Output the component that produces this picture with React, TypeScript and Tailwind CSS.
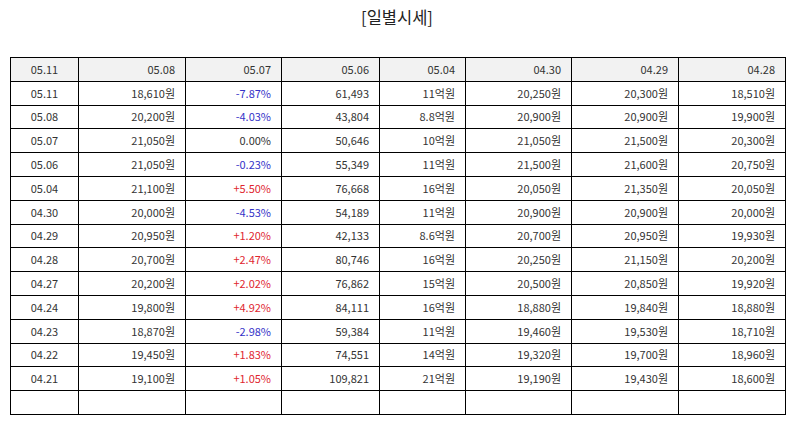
const cols = [68, 107, 96, 98, 86, 106, 107, 107];

const header = ['05.11', '05.08', '05.07', '05.06', '05.04', '04.30', '04.29', '04.28'];

type Row = [string, string, string, string, string, string, string, string];

const rows: Row[] = [
  ['05.11', '18,610원', '-7.87%', '61,493', '11억원', '20,250원', '20,300원', '18,510원'],
  ['05.08', '20,200원', '-4.03%', '43,804', '8.8억원', '20,900원', '20,900원', '19,900원'],
  ['05.07', '21,050원', '0.00%', '50,646', '10억원', '21,050원', '21,500원', '20,300원'],
  ['05.06', '21,050원', '-0.23%', '55,349', '11억원', '21,500원', '21,600원', '20,750원'],
  ['05.04', '21,100원', '+5.50%', '76,668', '16억원', '20,050원', '21,350원', '20,050원'],
  ['04.30', '20,000원', '-4.53%', '54,189', '11억원', '20,900원', '20,900원', '20,000원'],
  ['04.29', '20,950원', '+1.20%', '42,133', '8.6억원', '20,700원', '20,950원', '19,930원'],
  ['04.28', '20,700원', '+2.47%', '80,746', '16억원', '20,250원', '21,150원', '20,200원'],
  ['04.27', '20,200원', '+2.02%', '76,862', '15억원', '20,500원', '20,850원', '19,920원'],
  ['04.24', '19,800원', '+4.92%', '84,111', '16억원', '18,880원', '19,840원', '18,880원'],
  ['04.23', '18,870원', '-2.98%', '59,384', '11억원', '19,460원', '19,530원', '18,710원'],
  ['04.22', '19,450원', '+1.83%', '74,551', '14억원', '19,320원', '19,700원', '18,960원'],
  ['04.21', '19,100원', '+1.05%', '109,821', '21억원', '19,190원', '19,430원', '18,600원'],
];

function rateColor(v: string) {
  if (v.startsWith('+')) return 'text-[#e0262f]';
  if (v.startsWith('-')) return 'text-[#3432c8]';
  return 'text-[#333]';
}

export default function App() {
  return (
    <div
      className="w-[794px] h-[425px] bg-white overflow-hidden text-[#333]"
      style={{ fontFamily: '"Noto Sans CJK KR", "Noto Sans", sans-serif' }}
    >
      <div className="h-[57px] pt-[4px] text-center text-[16.5px] leading-[26px] text-[#222]">
        [일별시세]
      </div>
      <table className="ml-[10px] border-collapse table-fixed text-[11px] leading-none">
        <colgroup>
          {cols.map((w, i) => (
            <col key={i} style={{ width: w }} />
          ))}
        </colgroup>
        <thead>
          <tr className="h-[23.8px] bg-[#f2f2f2]">
            {header.map((h, i) => (
              <th
                key={i}
                className={`border border-black font-normal p-0 ${i === 0 ? 'text-center' : 'text-right pr-[10px]'}`}
              >
                {h}
              </th>
            ))}
          </tr>
        </thead>
        <tbody>
          {rows.map((r, ri) => (
            <tr key={ri} className="h-[23.8px]">
              {r.map((c, i) => (
                <td
                  key={i}
                  className={`border border-black p-0 ${i === 0 ? 'text-center' : 'text-right pr-[10px]'} ${
                    i === 2 ? rateColor(c) : ''
                  }`}
                >
                  {c}
                </td>
              ))}
            </tr>
          ))}
          <tr className="h-[23.8px]">
            {cols.map((_, i) => (
              <td key={i} className="border border-black p-0" />
            ))}
          </tr>
        </tbody>
      </table>
    </div>
  );
}
